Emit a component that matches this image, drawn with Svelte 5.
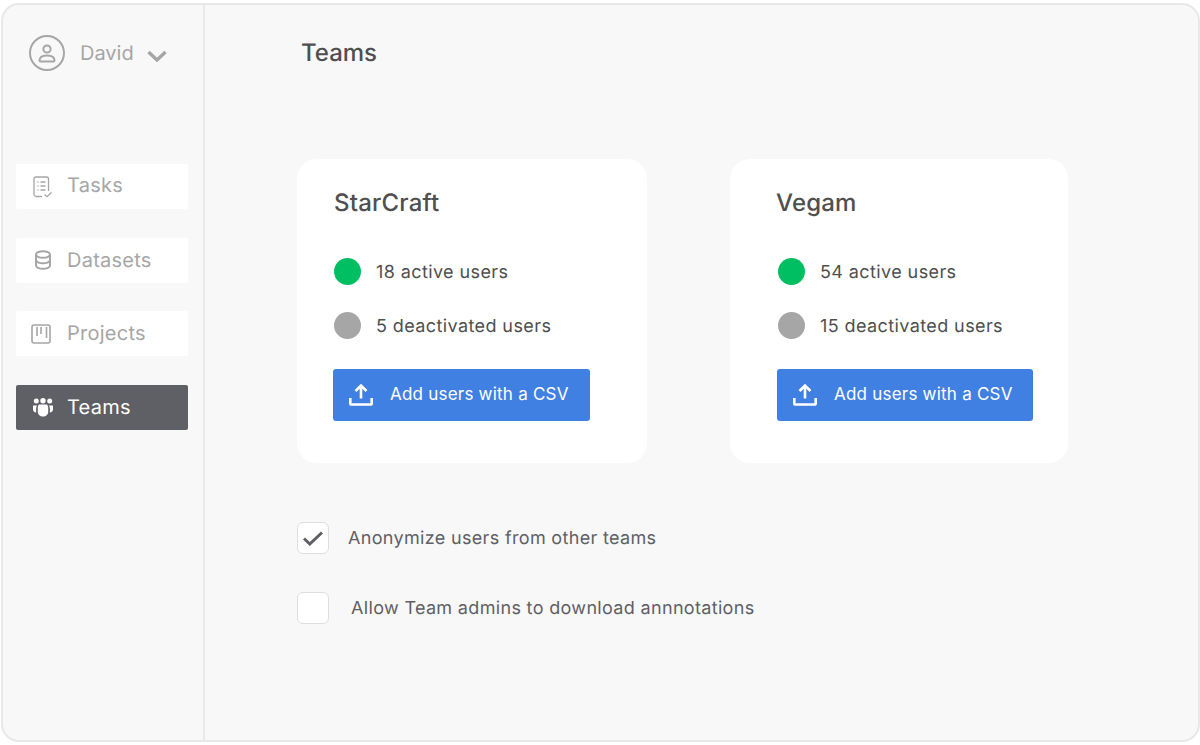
<script>
  const navItems = [
    { name: 'Tasks', icon: 'tasks', lift: 4 },
    { name: 'Datasets', icon: 'datasets', lift: 0 },
    { name: 'Projects', icon: 'projects', lift: 2 },
    { name: 'Teams', icon: 'teams', lift: 0, active: true }
  ];

  const teams = [
    { name: 'StarCraft', active: 18, deactivated: 5, width: 350, pad: 37, titleShift: 0, btn: -1, btnWidth: 257 },
    { name: 'Vegam', active: 54, deactivated: 15, width: 338, pad: 48, titleShift: -2, btn: -1, btnWidth: 256 }
  ];
</script>

<div class="frame">
  <aside class="sidebar">
    <div class="user">
      <svg width="38" height="38" viewBox="0 0 38 38" fill="none" stroke="#a6a6a6" stroke-width="2">
        <circle cx="18" cy="18" r="17" />
        <circle cx="18" cy="14" r="3.6" />
        <path d="M10.5 25.5c0-3.2 3-5 7.5-5s7.500 1.800 7.500 5c0 .6-.4 1-1 1h-13c-.6 0-1-.4-1-1z" />
      </svg>
      <span class="userName">David</span>
      <svg class="chevron" width="20" height="12" viewBox="0 0 20 12" fill="none" stroke="#a6a6a6" stroke-width="3.400">
        <path d="M1.500 2l8.500 8 8.500-8" />
      </svg>
    </div>
    <nav class="nav">
      {#each navItems as item}
        <div class="navItem" class:active={item.active}>
          <span class="navIcon">
            {#if item.icon === 'tasks'}
              <svg width="20" height="22" viewBox="0 0 20 22" fill="none" stroke="#a6a6a6" stroke-width="1.300">
                <path d="M9 20.500H3a2 2 0 0 1-2-2V3a2 2 0 0 1 2-2h10.500a2 2 0 0 1 2 2v12" />
                <path d="M4.500 6h1M4.500 10h1M4.500 14h1M7.500 6h5M7.500 10h5M7.500 14h5" />
                <path d="M11.500 18.500l2.500 2.200 4.500-4.500" />
              </svg>
            {:else if item.icon === 'datasets'}
              <svg width="18" height="20" viewBox="0 0 18 20" fill="none" stroke="#a6a6a6" stroke-width="2">
                <ellipse cx="9" cy="4.500" rx="7" ry="3.300" />
                <path d="M2 4.500v11c0 1.800 3.100 3.300 7 3.300s7-1.500 7-3.300v-11" />
                <path d="M2 10c0 1.800 3.100 3.300 7 3.300s7-1.500 7-3.300" />
              </svg>
            {:else if item.icon === 'projects'}
              <svg class="projectsIcon" width="20" height="20" viewBox="0 0 20 20" fill="none" stroke="#a6a6a6" stroke-width="1.600">
                <rect x="1" y="1" width="18" height="18" rx="2" />
                <path d="M6 3v9M10 3v7M15.500 3v11" />
              </svg>
            {:else}
              <svg class="teamsIcon" width="20" height="19" viewBox="0 0 20 19" fill="#fff">
                <circle cx="3.300" cy="3" r="2.500" />
                <circle cx="10" cy="2.700" r="2.700" />
                <circle cx="16.700" cy="3" r="2.500" />
                <path d="M.2 7.500h3.900c-.7 1-1 2-1 3.200v3.800C1.300 14.300 0 13 0 11.200V8z" />
                <path d="M19.800 7.500h-3.900c.7 1 1 2 1 3.200v3.800c1.800-.2 3.100-1.500 3.100-3.300V8z" />
                <path d="M6 6.500h8c.8.8 1.200 2 1.200 3.200v4.300c0 2.500-2.300 4.500-5.200 4.500s-5.200-2-5.200-4.500V9.700c0-1.200.4-2.400 1.200-3.200z" />
              </svg>
            {/if}
          </span>
          <span style="padding-bottom: {item.lift}px">{item.name}</span>
        </div>
      {/each}
    </nav>
  </aside>

  <main class="main">
    <h1 class="title">Teams</h1>
    <div class="cards">
      {#each teams as team}
        <section class="card" style="width: {team.width}px; padding-left: {team.pad}px">
          <h2 class="cardTitle" style="margin-left: {team.titleShift}px">{team.name}</h2>
          <div class="stat">
            <span class="dot green"></span>
            <span class="statText">{team.active} active users</span>
          </div>
          <div class="stat">
            <span class="dot grey"></span>
            <span class="statText">{team.deactivated} deactivated users</span>
          </div>
          <button class="addBtn" style="margin-left: {team.btn}px; width: {team.btnWidth}px">
            <svg width="24" height="24" viewBox="0 0 24 24" fill="none" stroke="#fff" stroke-width="2.600">
              <path d="M12 16.500V3.500M6.500 9l5.500-5.500 5.500 5.500" />
              <path d="M1.300 16v5.200c0 .8.500 1.300 1.300 1.300h18.800c.8 0 1.300-.5 1.300-1.300V16" />
            </svg>
            <span>Add users with a CSV</span>
          </button>
        </section>
      {/each}
    </div>

    <div class="options">
      <div class="option">
        <span class="checkbox">
          <svg width="20" height="15" viewBox="0 0 20 15" fill="none" stroke="#5f5f66" stroke-width="3">
            <path d="M1 7.500l5.800 5.500L19 1.500" />
          </svg>
        </span>
        <span class="optionLabel">Anonymize users from other teams</span>
      </div>
      <div class="option">
        <span class="checkbox"></span>
        <span class="optionLabel second">Allow Team admins to download annnotations</span>
      </div>
    </div>
  </main>
</div>

<style>
  :global(body) {
    background: #fff;
    font-family: Inter, "Liberation Sans", sans-serif;
    text-rendering: geometricPrecision;
  }

  .frame {
    display: flex;
    box-sizing: border-box;
    width: 1199px;
    height: 739px;
    margin: 3px 0 0 1px;
    background: #f8f8f8;
    border: 2px solid #e8e8e8;
    border-radius: 18px;
    overflow: hidden;
  }

  .sidebar {
    box-sizing: border-box;
    width: 202px;
    flex-shrink: 0;
    padding: 0 15px 0 13px;
    border-right: 2px solid #e8e8e8;
  }

  .user {
    display: flex;
    align-items: center;
    height: 38px;
    margin: 30px 0 0 13px;
    color: #a6a6a6;
  }

  .userName {
    margin-left: 13px;
    padding-bottom: 2px;
    font-size: 20px;
  }

  .chevron {
    margin-left: 13px;
    margin-top: 4px;
  }

  .nav {
    display: grid;
    grid-auto-rows: 45px;
    row-gap: 28.67px;
    margin-top: 91px;
  }

  .navItem {
    display: flex;
    align-items: center;
    background: #fff;
    border-radius: 2px;
    color: #a6a6a6;
    font-size: 20px;
    letter-spacing: 0.25px;
  }

  .navItem.active {
    background: #5f5f66;
    color: #fff;
  }

  .navIcon {
    display: flex;
    justify-content: center;
    align-items: center;
    width: 51px;
    padding-left: 2px;
    box-sizing: border-box;
    flex-shrink: 0;
  }

  .projectsIcon {
    margin-left: -3px;
  }

  .teamsIcon {
    margin-left: 1px;
  }

  .main {
    flex: 1;
    padding-left: 92px;
  }

  .title {
    margin: 30px 0 0 4px;
    font-size: 24px;
    font-weight: 450;
    line-height: 36px;
    color: #4f4f4f;
  }

  .cards {
    display: flex;
    gap: 83px;
    margin-top: 88px;
  }

  .card {
    box-sizing: border-box;
    height: 304px;
    padding-top: 26px;
    background: #fff;
    border-radius: 20px;
  }

  .cardTitle {
    margin: 0 0 37px;
    font-size: 24px;
    font-weight: 450;
    line-height: 36px;
    letter-spacing: 0.2px;
    color: #4f4f4f;
  }

  .stat {
    display: flex;
    align-items: center;
    gap: 15px;
    height: 27px;
    margin-bottom: 27px;
    font-size: 18px;
    letter-spacing: 0.4px;
    color: #4f4f4f;
  }

  .statText {
    padding-top: 2px;
  }

  .dot {
    width: 27px;
    height: 27px;
    border-radius: 50%;
  }

  .green {
    background: #00bf63;
  }

  .grey {
    background: #a6a6a6;
  }

  .addBtn {
    display: flex;
    align-items: center;
    gap: 17px;
    box-sizing: border-box;
    height: 52px;
    margin-top: 30px;
    padding: 0 0 2px 16px;
    border: 0;
    border-radius: 3px;
    background: #4180e3;
    color: #fff;
    font-family: inherit;
    font-size: 17px;
    letter-spacing: 0.22px;
  }

  .options {
    display: flex;
    flex-direction: column;
    gap: 38px;
    margin-top: 59px;
  }

  .option {
    display: flex;
    align-items: center;
    font-size: 18px;
    letter-spacing: 0.33px;
    color: #5f5f66;
  }

  .checkbox {
    display: flex;
    justify-content: center;
    align-items: center;
    box-sizing: border-box;
    width: 32px;
    height: 32px;
    background: #fff;
    border: 1px solid #dedede;
    border-radius: 6px;
  }

  .optionLabel {
    margin-left: 19px;
  }

  .optionLabel.second {
    margin-left: 22px;
  }
</style>
